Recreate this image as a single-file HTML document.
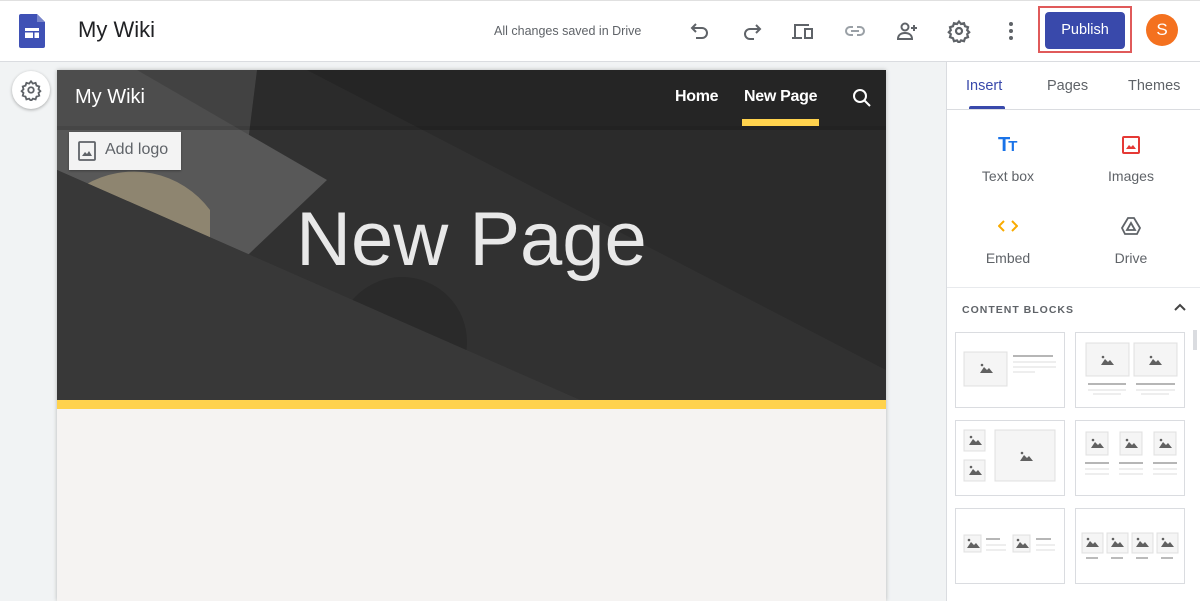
<!DOCTYPE html>
<html><head><meta charset="utf-8"><style>
*{box-sizing:border-box;margin:0;padding:0}
body{width:1200px;height:601px;overflow:hidden;background:#f1f3f4;font-family:"Liberation Sans",Arial,sans-serif;position:relative}
.top{position:absolute;left:0;top:0;width:1200px;height:62px;background:#fff;border-bottom:1px solid #dadce0;border-top:1px solid #e0e0e0}
.abs{position:absolute}
.ic{position:absolute;top:18px;width:24px;height:24px}
.panel{position:absolute;left:946px;top:62px;width:254px;height:539px;background:#fff;border-left:1px solid #dadce0}
.tab{position:absolute;top:78px;font-size:14.5px;color:#5f6368}
.blk{position:absolute;width:110px;height:76px;border:1px solid #dadce0;background:#fff}
.lbl{position:absolute;font-size:14px;color:#5f6368;text-align:center;width:100px}
</style></head><body>
<div class="top">
  <svg class="abs" style="left:19px;top:13px" width="26" height="34" viewBox="0 0 26 34"><path d="M2 0h16l8 8v24a2 2 0 0 1-2 2H2a2 2 0 0 1-2-2V2a2 2 0 0 1 2-2z" fill="#3f51b5"/><path d="M18 0v8h8z" fill="#7986cb"/><rect x="6" y="14" width="14" height="10" fill="#fff"/><rect x="6" y="17" width="14" height="1.5" fill="#3f51b5"/><rect x="14" y="18.5" width="1.5" height="6" fill="#3f51b5"/></svg>
  <div class="abs" style="left:78px;top:16px;font-size:22px;color:#202124">My Wiki</div>
  <div class="abs" style="left:494px;top:23px;font-size:12.5px;color:#5f6368">All changes saved in Drive</div>
  <svg class="ic" style="left:688px" viewBox="0 0 24 24" fill="none" stroke="#5f6368" stroke-width="2"><path d="M8 5 4 9l4 4"/><path d="M4 9h10a5 5 0 0 1 0 10H8"/></svg>
  <svg class="ic" style="left:740px" viewBox="0 0 24 24" fill="none" stroke="#5f6368" stroke-width="2"><path d="M16 6l4 4-4 4"/><path d="M20 10H10a5 5 0 0 0 0 10h4"/></svg>
  <svg class="ic" style="left:791px" viewBox="0 0 24 24" fill="#5f6368"><path d="M3 5h15v2H5v11h6v2H1v-2h2z"/><path d="M13 9h9v11h-9zM15 11v7h5v-7z"/></svg>
  <svg class="ic" style="left:843px" viewBox="0 0 24 24" fill="none" stroke="#9aa0a6" stroke-width="2"><path d="M10 8H7a4 4 0 0 0 0 8h3M14 8h3a4 4 0 0 1 0 8h-3M8 12h8"/></svg>
  <svg class="ic" style="left:895px" viewBox="0 0 24 24" fill="none" stroke="#5f6368" stroke-width="2"><circle cx="10" cy="8" r="3.5"/><path d="M3 20c0-4 3-6 7-6s7 2 7 6z"/><path d="M19 6v6M16 9h6"/></svg>
  <svg class="ic" style="left:947px" viewBox="0 0 24 24" fill="none" stroke="#5f6368" stroke-width="2.2"><circle cx="12" cy="12" r="3"/><path d="M12 2.5l2 2.5 3-.8 1 3 3 1-.8 3 2 2-2 2 .8 3-3 1-1 3-3-.8-2 2.5-2-2.5-3 .8-1-3-3-1 .8-3-2-2 2-2-.8-3 3-1 1-3 3 .8z"/></svg>
  <svg class="ic" style="left:999px" viewBox="0 0 24 24" fill="#5f6368"><circle cx="12" cy="5" r="2"/><circle cx="12" cy="12" r="2"/><circle cx="12" cy="19" r="2"/></svg>
  <div class="abs" style="left:1038px;top:5px;width:94px;height:47px;border:2px solid #e05a5a"></div>
  <div class="abs" style="left:1045px;top:11px;width:80px;height:37px;background:#3949ab;border-radius:4px;color:#fff;font-size:14.5px;text-align:center;line-height:37px">Publish</div>
  <div class="abs" style="left:1146px;top:13px;width:32px;height:32px;border-radius:50%;background:#f4711f;color:#fff;font-size:17px;text-align:center;line-height:32px">S</div>
</div>

<div class="abs" style="left:12px;top:71px;width:38px;height:38px;border-radius:50%;background:#fff;box-shadow:0 1px 3px rgba(0,0,0,.3)"></div>
<svg class="abs" style="left:20px;top:79px" width="22" height="22" viewBox="0 0 24 24" fill="none" stroke="#5f6368" stroke-width="2"><circle cx="12" cy="12" r="3"/><path d="M12 2.5l2 2.5 3-.8 1 3 3 1-.8 3 2 2-2 2 .8 3-3 1-1 3-3-.8-2 2.5-2-2.5-3 .8-1-3-3-1 .8-3-2-2 2-2-.8-3 3-1 1-3 3 .8z"/></svg>

<div class="abs" style="left:57px;top:70px;width:829px;height:531px;background:#f5f3f2;box-shadow:0 0 4px rgba(0,0,0,.25);overflow:hidden">
  <svg class="abs" style="left:0;top:0" width="829" height="330" viewBox="0 0 829 330">
    <rect width="829" height="330" fill="#313131"/>
    <polygon points="250,0 829,0 829,300" fill="#2b2b2b"/>
    <polygon points="0,0 200,0 175,200 0,100" fill="#4c4c4c"/>
    <polygon points="0,0 80,0 270,110 175,200 0,100" fill="#585858"/>
    <path d="M28 115 A95 95 0 0 1 153 140 L153 195 Z" fill="#8e8570"/>
    <polygon points="0,100 523,330 0,330" fill="#383838"/>
    <circle cx="345" cy="272" r="65" fill="#2a2a2a"/>
    <polygon points="0,100 523,330 0,330" fill="#383838"/>
    <rect width="829" height="56" fill="#000" opacity=".12"/>
    <rect y="56" width="829" height="4" fill="#000" opacity=".2"/>
  </svg>
  <div class="abs" style="left:18px;top:16px;font-size:20px;color:#fff">My Wiki</div>
  <div class="abs" style="left:618px;top:18px;font-size:16px;font-weight:bold;color:#fff;letter-spacing:-.3px">Home</div>
  <div class="abs" style="left:687px;top:18px;font-size:16px;font-weight:bold;color:#fff;letter-spacing:-.3px">New Page</div>
  <div class="abs" style="left:685px;top:49px;width:77px;height:7px;background:#ffd24d"></div>
  <svg class="abs" style="left:795px;top:18px" width="20" height="20" viewBox="0 0 20 20" fill="none" stroke="#fff" stroke-width="2"><circle cx="8" cy="8" r="6"/><path d="M12.5 12.5 18 18"/></svg>
  <div class="abs" style="left:12px;top:62px;width:112px;height:38px;background:#f3f3f3;box-shadow:0 1px 2px rgba(0,0,0,.3)"></div>
  <svg class="abs" style="left:21px;top:71px" width="18" height="20" viewBox="0 0 18 20" fill="none" stroke="#5f6368" stroke-width="1.8"><rect x="1" y="1" width="16" height="18" rx="1"/><path d="M4 15l3-4 2 2 2-3 3 5z" fill="#5f6368" stroke="none"/></svg>
  <div class="abs" style="left:48px;top:71px;font-size:16px;color:#5f6368">Add logo</div>
  <div class="abs" style="left:0;top:126px;width:829px;text-align:center;font-size:76px;color:#e8e8e8;font-weight:normal">New Page</div>
  <div class="abs" style="left:0;top:330px;width:829px;height:9px;background:#ffd24d"></div>
</div>

<div class="panel">
  <div class="abs" style="left:0;top:47px;width:254px;height:1px;background:#dadce0"></div>
  <div class="abs" style="left:22px;top:44px;width:36px;height:3px;background:#3949ab;border-radius:2px 2px 0 0"></div>
  <div class="abs" style="left:0;top:225px;width:254px;height:1px;background:#e8eaed"></div>
</div>
<div class="tab" style="left:966px;color:#3949ab">Insert</div>
<div class="tab" style="left:1047px">Pages</div>
<div class="tab" style="left:1128px">Themes</div>
<div class="abs" style="left:998px;top:134px;font-size:20px;font-weight:bold;color:#1a73e8;letter-spacing:-2px">T<span style="font-size:15px">T</span></div>
<svg class="abs" style="left:1122px;top:136px" width="18" height="18" viewBox="0 0 18 18" fill="none" stroke="#e53935" stroke-width="2"><rect x="1" y="1" width="16" height="16" rx="1"/><path d="M4 13l3-4 2 2 2-2 3 4z" fill="#e53935" stroke="none"/></svg>
<div class="lbl" style="left:958px;top:168px">Text box</div>
<div class="lbl" style="left:1081px;top:168px">Images</div>
<svg class="abs" style="left:998px;top:219px" width="20" height="14" viewBox="0 0 20 14" fill="none" stroke="#f9ab00" stroke-width="2"><path d="M6 2 1 7l5 5M14 2l5 5-5 5"/></svg>
<svg class="abs" style="left:1121px;top:217px" width="20" height="18" viewBox="0 0 20 18" fill="none" stroke="#5f6368" stroke-width="1.8"><path d="M7 1h6l6 10-3 6H4l-3-6z"/><path d="M10 6l-4 7h8z"/></svg>
<div class="lbl" style="left:958px;top:250px">Embed</div>
<div class="lbl" style="left:1081px;top:250px">Drive</div>
<div class="abs" style="left:962px;top:304px;font-size:10.5px;font-weight:bold;color:#5f6368;letter-spacing:1px">CONTENT BLOCKS</div>
<svg class="abs" style="left:1173px;top:302px" width="14" height="10" viewBox="0 0 14 10" fill="none" stroke="#444" stroke-width="2"><path d="M2 8l5-5 5 5"/></svg>
<div class="abs" style="left:1193px;top:330px;width:4px;height:20px;background:#dadce0"></div>
<div class="blk" style="left:955px;top:332px"></div>
<div class="blk" style="left:1075px;top:332px"></div>
<div class="blk" style="left:955px;top:420px"></div>
<div class="blk" style="left:1075px;top:420px"></div>
<div class="blk" style="left:955px;top:508px"></div>
<div class="blk" style="left:1075px;top:508px"></div>
<svg class="abs" style="left:955px;top:332px" width="245" height="269" viewBox="0 0 245 269" fill="none">
<defs><g id="m"><path d="M-6 4l4-6 3 3 2-2 4 5z" fill="#616161"/><circle cx="-4" cy="-4" r="1.3" fill="#616161"/></g></defs>
<rect x="9" y="20" width="43" height="34" fill="#f5f5f5" stroke="#e0e0e0"/>
<use href="#m" x="31" y="37"/>
<g stroke="#9e9e9e" stroke-width="1.5"><path d="M58 24h40"/></g><g stroke="#ddd"><path d="M58 30h43M58 35h43M58 40h22"/></g>
<rect x="131" y="11" width="43" height="33" fill="#f5f5f5" stroke="#e0e0e0"/><rect x="179" y="11" width="43" height="33" fill="#f5f5f5" stroke="#e0e0e0"/>
<use href="#m" x="152" y="29"/><use href="#m" x="200" y="29"/>
<g stroke="#9e9e9e" stroke-width="1.5"><path d="M133 52h38M181 52h39"/></g><g stroke="#ddd"><path d="M133 58h38M181 58h39M138 62h28M186 62h28"/></g>
<rect x="9" y="98" width="21" height="21" fill="#f5f5f5" stroke="#e0e0e0"/><rect x="9" y="128" width="21" height="21" fill="#f5f5f5" stroke="#e0e0e0"/><rect x="40" y="98" width="60" height="51" fill="#f5f5f5" stroke="#e0e0e0"/>
<use href="#m" x="20" y="109"/><use href="#m" x="20" y="139"/><use href="#m" x="71" y="125"/>
<rect x="131" y="100" width="22" height="23" fill="#f5f5f5" stroke="#e0e0e0"/><rect x="165" y="100" width="22" height="23" fill="#f5f5f5" stroke="#e0e0e0"/><rect x="199" y="100" width="22" height="23" fill="#f5f5f5" stroke="#e0e0e0"/>
<use href="#m" x="142" y="112"/><use href="#m" x="176" y="112"/><use href="#m" x="210" y="112"/>
<g stroke="#9e9e9e" stroke-width="1.5"><path d="M130 131h24M164 131h24M198 131h24"/></g><g stroke="#ddd"><path d="M130 137h24M164 137h24M198 137h24M130 142h24M164 142h24M198 142h24"/></g>
<rect x="9" y="203" width="17" height="17" fill="#f5f5f5" stroke="#e0e0e0"/><rect x="58" y="203" width="17" height="17" fill="#f5f5f5" stroke="#e0e0e0"/>
<use href="#m" x="18" y="212"/><use href="#m" x="67" y="212"/>
<g stroke="#9e9e9e" stroke-width="1.5"><path d="M31 207h14M81 207h15"/></g><g stroke="#ddd"><path d="M31 213h20M31 218h20M81 213h19M81 218h19"/></g>
<rect x="127" y="201" width="21" height="20" fill="#f5f5f5" stroke="#e0e0e0"/><rect x="152" y="201" width="21" height="20" fill="#f5f5f5" stroke="#e0e0e0"/><rect x="177" y="201" width="21" height="20" fill="#f5f5f5" stroke="#e0e0e0"/><rect x="202" y="201" width="21" height="20" fill="#f5f5f5" stroke="#e0e0e0"/>
<use href="#m" x="137" y="211"/><use href="#m" x="162" y="211"/><use href="#m" x="187" y="211"/><use href="#m" x="212" y="211"/>
<g stroke="#777" stroke-width="1"><path d="M131 226h12M156 226h12M181 226h12M206 226h12"/></g>
</svg>
</body></html>
